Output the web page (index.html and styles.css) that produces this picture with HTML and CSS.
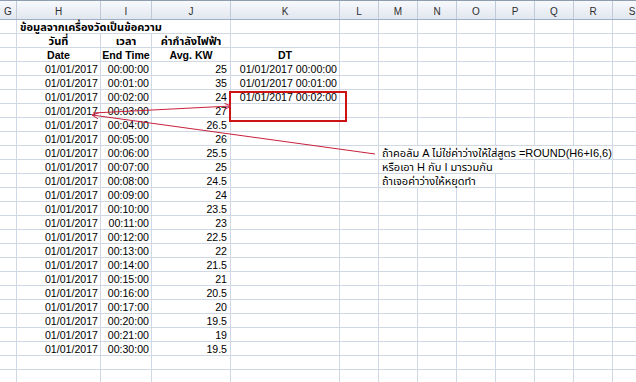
FILE: index.html
```html
<!DOCTYPE html>
<html lang="th">
<head>
<meta charset="utf-8">
<title>Sheet</title>
<link rel="stylesheet" href="styles.css">
</head>
<body>
<div class="sheet">
  <div class="colhead">
    <div class="ch">G</div><div class="ch">H</div><div class="ch">I</div><div class="ch">J</div><div class="ch">K</div><div class="ch">L</div><div class="ch">M</div><div class="ch">N</div><div class="ch">O</div><div class="ch">P</div><div class="ch">Q</div><div class="ch">R</div><div class="ch">S</div>
  </div>
  <div class="body">
    <div class="row"><div class="c h over b left span3 th">ข้อมูลจากเครื่องวัดเป็นข้อความ</div></div>
    <div class="row"><div class="c h b ctr th">วันที่</div><div class="c i b ctr th">เวลา</div><div class="c j b ctr th">ค่ากำลังไฟฟ้า</div></div>
    <div class="row"><div class="c h b ctr">Date</div><div class="c i b ctr">End Time</div><div class="c j b ctr">Avg. KW</div><div class="c k b ctr">DT</div></div>
    <div class="row"><div class="c h">01/01/2017</div><div class="c i">00:00:00</div><div class="c j">25</div><div class="c k">01/01/2017 00:00:00</div></div>
    <div class="row"><div class="c h">01/01/2017</div><div class="c i">00:01:00</div><div class="c j">35</div><div class="c k">01/01/2017 00:01:00</div></div>
    <div class="row"><div class="c h">01/01/2017</div><div class="c i">00:02:00</div><div class="c j">24</div><div class="c k">01/01/2017 00:02:00</div></div>
    <div class="row"><div class="c h">01/01/2017</div><div class="c i">00:03:00</div><div class="c j">27</div></div>
    <div class="row"><div class="c h">01/01/2017</div><div class="c i">00:04:00</div><div class="c j">26.5</div></div>
    <div class="row"><div class="c h">01/01/2017</div><div class="c i">00:05:00</div><div class="c j">26</div></div>
    <div class="row"><div class="c h">01/01/2017</div><div class="c i">00:06:00</div><div class="c j">25.5</div><div class="c m over left span6 th">ถ้าคอลัม A ไม่ใช่ค่าว่างให้ใส่สูตร =ROUND(H6+I6,6)</div></div>
    <div class="row"><div class="c h">01/01/2017</div><div class="c i">00:07:00</div><div class="c j">25</div><div class="c m over left span4 th">หรือเอา H กับ I มารวมกัน</div></div>
    <div class="row"><div class="c h">01/01/2017</div><div class="c i">00:08:00</div><div class="c j">24.5</div><div class="c m over left span3 th">ถ้าเจอค่าว่างให้หยุดทำ</div></div>
    <div class="row"><div class="c h">01/01/2017</div><div class="c i">00:09:00</div><div class="c j">24</div></div>
    <div class="row"><div class="c h">01/01/2017</div><div class="c i">00:10:00</div><div class="c j">23.5</div></div>
    <div class="row"><div class="c h">01/01/2017</div><div class="c i">00:11:00</div><div class="c j">23</div></div>
    <div class="row"><div class="c h">01/01/2017</div><div class="c i">00:12:00</div><div class="c j">22.5</div></div>
    <div class="row"><div class="c h">01/01/2017</div><div class="c i">00:13:00</div><div class="c j">22</div></div>
    <div class="row"><div class="c h">01/01/2017</div><div class="c i">00:14:00</div><div class="c j">21.5</div></div>
    <div class="row"><div class="c h">01/01/2017</div><div class="c i">00:15:00</div><div class="c j">21</div></div>
    <div class="row"><div class="c h">01/01/2017</div><div class="c i">00:16:00</div><div class="c j">20.5</div></div>
    <div class="row"><div class="c h">01/01/2017</div><div class="c i">00:17:00</div><div class="c j">20</div></div>
    <div class="row"><div class="c h">01/01/2017</div><div class="c i">00:20:00</div><div class="c j">19.5</div></div>
    <div class="row"><div class="c h">01/01/2017</div><div class="c i">00:21:00</div><div class="c j">19</div></div>
    <div class="row"><div class="c h">01/01/2017</div><div class="c i">00:30:00</div><div class="c j">19.5</div></div>
    <div class="row"></div>
    <div class="row"></div>
  </div>
  <svg class="overlay" width="636" height="382" viewBox="0 0 636 382" aria-hidden="true">
    <rect x="230" y="92" width="116" height="29" fill="none" stroke="#cc1414" stroke-width="2"/>
    <g fill="none" stroke="#c8203c" stroke-width="1">
      <line x1="93" y1="113" x2="231" y2="106"/>
      <polyline points="224.5,103.4 231,106 224.8,109.3"/>
      <line x1="375" y1="154" x2="92" y2="115"/>
      <polyline points="98.7,112.9 92,115 97.9,118.8"/>
    </g>
  </svg>
</div>
</body>
</html>
```

FILE: styles.css
```css
html, body {
  margin: 0;
  padding: 0;
  background: #ffffff;
}

body {
  width: 636px;
  height: 382px;
  overflow: hidden;
  font-family: "Liberation Sans", Tahoma, "Noto Sans Thai", "Noto Sans", sans-serif;
  font-size: 10.6px;
  color: #000000;
}

.sheet {
  position: relative;
  width: 636px;
  height: 382px;
  overflow: hidden;
}

.colhead,
.row {
  display: grid;
  grid-template-columns: 17px 84px 51px 79px 109px 39px 39px 39px 39px 39px 39px 39px 39px;
}

.colhead {
  height: 20px;
  box-sizing: border-box;
  border-top: 1px solid #8f9db1;
  border-bottom: 1px solid #9eaec4;
}

.ch {
  height: 18px;
  box-sizing: border-box;
  border-right: 1px solid #c1cbd8;
  background: linear-gradient(#f7f9fc, #e1e7ef);
  text-align: center;
  font-size: 10px;
  line-height: 22px;
  color: #2f2f2f;
  overflow: hidden;
}

.body {
  background-image:
    linear-gradient(#d0d7e5, #d0d7e5),
    linear-gradient(#d0d7e5, #d0d7e5),
    linear-gradient(#d0d7e5, #d0d7e5),
    linear-gradient(#d0d7e5, #d0d7e5),
    linear-gradient(#d0d7e5, #d0d7e5),
    linear-gradient(#d0d7e5, #d0d7e5),
    linear-gradient(#d0d7e5, #d0d7e5),
    linear-gradient(#d0d7e5, #d0d7e5),
    linear-gradient(#d0d7e5, #d0d7e5),
    linear-gradient(#d0d7e5, #d0d7e5),
    linear-gradient(#d0d7e5, #d0d7e5),
    linear-gradient(#d0d7e5, #d0d7e5);
  background-size: 1px 100%;
  background-repeat: no-repeat;
  background-position: 16px 0, 100px 0, 151px 0, 230px 0, 339px 0, 378px 0, 417px 0, 456px 0, 495px 0, 534px 0, 573px 0, 612px 0;
}

.row {
  height: 14px;
  box-sizing: border-box;
  border-bottom: 1px solid #d0d7e5;
}

.c {
  line-height: 14px;
  height: 13px;
  white-space: nowrap;
  text-align: right;
  padding-right: 3px;
  overflow: visible;
}

.th {
  font-size: 11px;
}

.h { grid-column: 2; }
.i { grid-column: 3; }
.j { grid-column: 4; padding-right: 4px; }
.k { grid-column: 5; }
.m { grid-column: 7; }

.span3 { grid-column-end: span 3; }
.span4 { grid-column-end: span 4; }
.span6 { grid-column-end: span 6; }

.b { font-weight: bold; }

.ctr {
  text-align: center;
  padding-right: 1px;
}

.left {
  text-align: left;
  padding-left: 3px;
  padding-right: 0;
}

.over {
  background: #ffffff;
  margin-right: 1px;
}

.overlay {
  position: absolute;
  left: 0;
  top: 0;
  pointer-events: none;
}
```
